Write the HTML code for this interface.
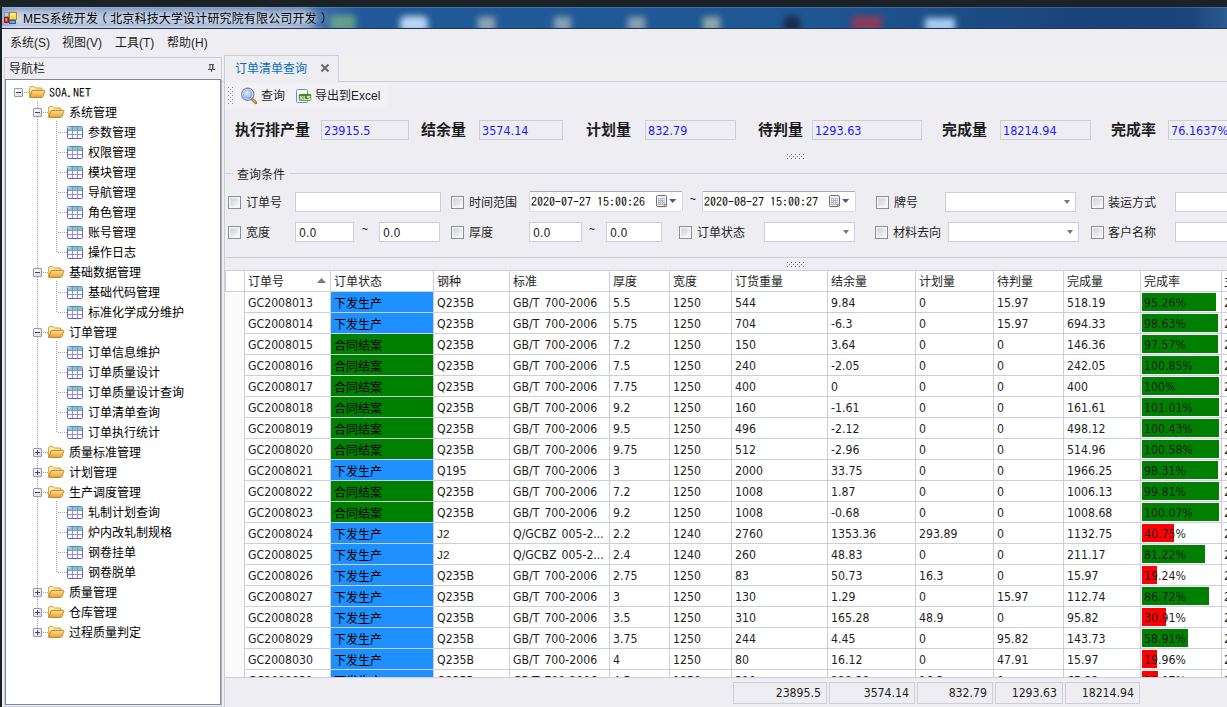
<!DOCTYPE html>
<html lang="zh-CN"><head><meta charset="utf-8"><title>MES系统开发</title>
<style>
html,body{margin:0;padding:0}
body{width:1227px;height:707px;overflow:hidden;position:relative;background:#EEEEF2;
 font-family:"Liberation Sans","Noto Sans CJK SC",sans-serif;font-size:12px;color:#1e1e1e;line-height:1}
.a{position:absolute;white-space:nowrap}
.t{position:absolute;white-space:nowrap;font-size:12px;line-height:14px;height:14px;color:#1e1e1e}
.cb{position:absolute;width:11px;height:11px;border:1px solid #8e8f8f;background:linear-gradient(135deg,#d4d7db 0%,#f4f4f4 60%,#fdfdfd 100%);box-shadow:inset 0 0 0 1px #f4f4f4}
.cb i{position:absolute;left:2px;top:2px;width:7px;height:7px;background:linear-gradient(135deg,#cdd1d6,#f6f6f6)}
.in{position:absolute;background:#fff;border:1px solid #CCCEDB;box-sizing:border-box}
.sv{position:absolute;background:#EEEEF2;border:1px solid #CCCEDB;box-sizing:border-box;height:20px;color:#1a1aff;font-family:"DejaVu Sans Condensed","Liberation Sans","Noto Sans CJK SC",sans-serif;font-size:12.5px;line-height:20px;padding-left:2px}
.sl{position:absolute;font-weight:bold;font-size:15px;line-height:18px;color:#1e1e1e;white-space:nowrap}
.arr{position:absolute;width:0;height:0;border-left:3.5px solid transparent;border-right:3.5px solid transparent;border-top:4px solid #777}
.g{position:absolute;white-space:nowrap;font-family:"DejaVu Sans Condensed","Liberation Sans","Noto Sans CJK SC",sans-serif;font-size:12.2px;word-spacing:1.5px;line-height:21px;height:21px;color:#1e1e1e;overflow:hidden}
.gh{position:absolute;white-space:nowrap;font-size:12px;line-height:20px;height:20px;color:#1e1e1e}
.vl{position:absolute;width:1px;background:#CCCEDB}
.hl{position:absolute;height:1px;background:#CCCEDB}
.ft{position:absolute;box-sizing:border-box;border:1px solid #CCCEDB;background:#EEEEF2;height:22px;top:682px;font-family:"DejaVu Sans Condensed","Liberation Sans","Noto Sans CJK SC",sans-serif;font-size:12.2px;line-height:21px;text-align:right;padding-right:5px;color:#1e1e1e}
.tr{position:absolute;white-space:nowrap;font-size:12px;line-height:14px;color:#000}
</style></head>
<body>
<svg width="0" height="0" style="position:absolute"><defs>
<linearGradient id="fg" x1="0" y1="0" x2="0" y2="1"><stop offset="0" stop-color="#fbe08c"/><stop offset="0.5" stop-color="#f3c35c"/><stop offset="1" stop-color="#e2a034"/></linearGradient>
<linearGradient id="tb" x1="0" y1="0" x2="0" y2="1"><stop offset="0" stop-color="#4f86de"/><stop offset="0.4" stop-color="#5a6fdc"/><stop offset="1" stop-color="#6a5ad6"/></linearGradient>
<linearGradient id="fb" x1="0" y1="0" x2="1" y2="1"><stop offset="0" stop-color="#fff6c0"/><stop offset="0.5" stop-color="#fdf0a8"/><stop offset="1" stop-color="#f2cf70"/></linearGradient>
</defs></svg>
<div class="a" style="left:0;top:0;width:1227px;height:7px;background:#1b2225"></div>
<div class="a" style="left:2px;top:7px;width:1225px;height:21px;overflow:hidden;background:linear-gradient(90deg,#7b96c5 0px,#7290c0 40px,#6587bb 130px,#5a7fb5 230px,#4672ab 300px,#2f64a2 335px,#21599a 356px,#205a98 520px,#1f5794 800px,#1c4d86 950px,#1a4379 1100px,#1b467c 1190px,#2a5a90 1225px)"><div class="a" style="left:12px;top:3px;width:300px;height:19px;background:rgba(255,255,255,.52);filter:blur(5px);border-radius:9px"></div><div class="a" style="left:0;top:0;width:1225px;height:1px;background:rgba(255,255,255,.14)"></div><div class="a" style="left:0;top:3px;width:20px;height:17px;background:rgba(255,255,255,.45);filter:blur(3px)"></div><div class="a" style="left:0;top:19px;width:330px;height:2px;background:linear-gradient(90deg,rgba(255,255,255,.45) 0,rgba(255,255,255,.35) 280px,rgba(255,255,255,0) 330px)"></div><div class="a" style="left:328px;top:8px;width:26px;height:16px;background:#7fb783;opacity:.7;filter:blur(3px);border-radius:4px"></div><div class="a" style="left:398px;top:9px;width:28px;height:16px;background:#b9d6f2;filter:blur(3px);border-radius:6px"></div><div class="a" style="left:476px;top:10px;width:17px;height:14px;background:#90a7b4;filter:blur(3px)"></div><div class="a" style="left:552px;top:10px;width:17px;height:14px;background:#8ba3b3;filter:blur(3px)"></div><div class="a" style="left:626px;top:10px;width:17px;height:14px;background:#8ba3b3;filter:blur(3px)"></div><div class="a" style="left:701px;top:10px;width:17px;height:14px;background:#93a9a8;filter:blur(3px)"></div><div class="a" style="left:781px;top:9px;width:18px;height:16px;background:#1a2c4a;filter:blur(3px);border-radius:8px"></div><div class="a" style="left:850px;top:9px;width:30px;height:15px;background:#8a3b5a;filter:blur(3px)"></div><div class="a" style="left:923px;top:11px;width:30px;height:14px;background:#a9cdf0;filter:blur(3px)"></div></div>
<div class="a" style="left:2px;top:28px;width:1225px;height:1px;background:#1d3557"></div>
<div class="a" style="left:0;top:0;width:2px;height:707px;background:#1a2124"></div>
<svg class="a" style="left:4px;top:11px" width="14" height="14" viewBox="0 0 14 14">
<rect x="0.5" y="1.5" width="4" height="4" fill="#b9c6e2" stroke="#8796bd"/>
<rect x="5.5" y="1.5" width="7" height="7" fill="#ffd95a" stroke="#b8860b"/>
<rect x="6.5" y="2.5" width="5" height="2" fill="#fff1a8"/>
<rect x="0.5" y="6.5" width="4" height="5" fill="#e03224" stroke="#8f1d14"/>
<rect x="1.5" y="7.5" width="1.5" height="2" fill="#ffb0a0"/>
<rect x="5.5" y="9.5" width="6" height="3" fill="#6fa0e6" stroke="#2d5aa5"/>
<rect x="0.5" y="12.5" width="4" height="1" fill="#9fb0d0"/>
</svg>
<div class="a" style="left:23px;top:11px;font-size:12px;line-height:17px;letter-spacing:0.15px;color:#000;text-shadow:0 0 5px rgba(255,255,255,.7),0 0 8px rgba(255,255,255,.5)">MES系统开发<span style="margin-left:-3px;margin-right:3px">（</span>北京科技大学设计研究院有限公司开发<span style="margin-left:4px">）</span></div>
<div class="t" style="left:10px;top:36px">系统(S)</div>
<div class="t" style="left:62px;top:36px">视图(V)</div>
<div class="t" style="left:115px;top:36px">工具(T)</div>
<div class="t" style="left:167px;top:36px">帮助(H)</div>
<div class="a" style="left:222px;top:55px;width:1005px;height:26px;background:#F0F0F0"></div>
<div class="a" style="left:4px;top:57px;width:218px;height:650px;border:1px solid #CCCEDB;box-sizing:border-box;background:#EEEEF2"></div>
<div class="t" style="left:9px;top:62px">导航栏</div>
<svg class="a" style="left:208px;top:64px" width="7" height="8" viewBox="0 0 7 8"><path d="M1 0.5H6M2 0.5V5M4.75 0.5V5M0 5.5H7M3.5 6V8" stroke="#505050" stroke-width="1" fill="none"/><path d="M4 1V5H5.25V1Z" fill="#505050"/></svg>
<div class="a" style="left:5px;top:79px;width:216px;height:626px;border:1px solid #828790;box-sizing:border-box;background:#fff"></div>
<div class="a" style="left:221px;top:80px;width:1px;height:625px;background:#b4b7c4"></div>
<div class="a" style="left:37px;top:101px;width:1px;height:527px;background:repeating-linear-gradient(180deg,#a0a0a0 0 1px,transparent 1px 2px)"></div>
<div class="a" style="left:56px;top:121px;width:1px;height:132px;background:repeating-linear-gradient(180deg,#a0a0a0 0 1px,transparent 1px 2px)"></div>
<div class="a" style="left:56px;top:281px;width:1px;height:32px;background:repeating-linear-gradient(180deg,#a0a0a0 0 1px,transparent 1px 2px)"></div>
<div class="a" style="left:56px;top:341px;width:1px;height:92px;background:repeating-linear-gradient(180deg,#a0a0a0 0 1px,transparent 1px 2px)"></div>
<div class="a" style="left:56px;top:501px;width:1px;height:72px;background:repeating-linear-gradient(180deg,#a0a0a0 0 1px,transparent 1px 2px)"></div>
<div class="a" style="left:14px;top:88px;width:7px;height:7px;border:1px solid #9b9b9b;border-radius:1px;background:linear-gradient(135deg,#fff,#dcdad5)"></div><div class="a" style="left:16px;top:92px;width:5px;height:1px;background:#2b44a3"></div>
<div class="a" style="left:24px;top:92px;width:6px;height:1px;background:repeating-linear-gradient(90deg,#a0a0a0 0 1px,transparent 1px 2px)"></div>
<svg class="a" style="left:29px;top:86px" width="17" height="12" viewBox="0 0 17 12">
<path d="M0.7 11V1.6Q0.7 0.6 1.8 0.6H4.6Q5.2 0.6 5.6 1.1L6.4 2H12Q13 2 13 3V4.4H3.6L0.7 11Z" fill="url(#fb)" stroke="#c98f2e" stroke-width="0.9"/>
<path d="M0.8 11.45L3 5Q3.2 4.4 3.9 4.4H15.3Q16.2 4.4 15.9 5.2L13.7 10.8Q13.4 11.5 12.6 11.5H1Z" fill="url(#fg)" stroke="#bd7b24" stroke-width="0.9"/>
</svg>
<div class="tr" style="left:49px;top:85px;font-family:IPAGothic,'Liberation Mono',monospace;font-size:12px;line-height:14px">SOA.NET</div>
<div class="a" style="left:33px;top:108px;width:7px;height:7px;border:1px solid #9b9b9b;border-radius:1px;background:linear-gradient(135deg,#fff,#dcdad5)"></div><div class="a" style="left:35px;top:112px;width:5px;height:1px;background:#2b44a3"></div>
<div class="a" style="left:43px;top:112px;width:6px;height:1px;background:repeating-linear-gradient(90deg,#a0a0a0 0 1px,transparent 1px 2px)"></div>
<svg class="a" style="left:48px;top:106px" width="17" height="12" viewBox="0 0 17 12">
<path d="M0.7 11V1.6Q0.7 0.6 1.8 0.6H4.6Q5.2 0.6 5.6 1.1L6.4 2H12Q13 2 13 3V4.4H3.6L0.7 11Z" fill="url(#fb)" stroke="#c98f2e" stroke-width="0.9"/>
<path d="M0.8 11.45L3 5Q3.2 4.4 3.9 4.4H15.3Q16.2 4.4 15.9 5.2L13.7 10.8Q13.4 11.5 12.6 11.5H1Z" fill="url(#fg)" stroke="#bd7b24" stroke-width="0.9"/>
</svg>
<div class="tr" style="left:69px;top:106px">系统管理</div>
<div class="a" style="left:58px;top:132px;width:9px;height:1px;background:repeating-linear-gradient(90deg,#a0a0a0 0 1px,transparent 1px 2px)"></div>
<svg class="a" style="left:67px;top:126px" width="16" height="13" viewBox="0 0 16 13">
<rect x="0.5" y="0.5" width="15" height="12" rx="1.2" fill="#fdfdf4" stroke="url(#tb)"/>
<rect x="1" y="1" width="14" height="3.5" fill="#8ccab6"/>
<rect x="1" y="1" width="2.2" height="1.6" fill="#cfe6fb"/>
<path d="M1 4.5H15M1 8.5H15M5.5 1V12M10.5 1V12" stroke="#8c90da" stroke-width="1" fill="none"/>
<path d="M5.5 1V4.5M10.5 1V4.5" stroke="#6f9ad6" stroke-width="1" fill="none"/>
</svg>
<div class="tr" style="left:88px;top:126px">参数管理</div>
<div class="a" style="left:58px;top:152px;width:9px;height:1px;background:repeating-linear-gradient(90deg,#a0a0a0 0 1px,transparent 1px 2px)"></div>
<svg class="a" style="left:67px;top:146px" width="16" height="13" viewBox="0 0 16 13">
<rect x="0.5" y="0.5" width="15" height="12" rx="1.2" fill="#fdfdf4" stroke="url(#tb)"/>
<rect x="1" y="1" width="14" height="3.5" fill="#8ccab6"/>
<rect x="1" y="1" width="2.2" height="1.6" fill="#cfe6fb"/>
<path d="M1 4.5H15M1 8.5H15M5.5 1V12M10.5 1V12" stroke="#8c90da" stroke-width="1" fill="none"/>
<path d="M5.5 1V4.5M10.5 1V4.5" stroke="#6f9ad6" stroke-width="1" fill="none"/>
</svg>
<div class="tr" style="left:88px;top:146px">权限管理</div>
<div class="a" style="left:58px;top:172px;width:9px;height:1px;background:repeating-linear-gradient(90deg,#a0a0a0 0 1px,transparent 1px 2px)"></div>
<svg class="a" style="left:67px;top:166px" width="16" height="13" viewBox="0 0 16 13">
<rect x="0.5" y="0.5" width="15" height="12" rx="1.2" fill="#fdfdf4" stroke="url(#tb)"/>
<rect x="1" y="1" width="14" height="3.5" fill="#8ccab6"/>
<rect x="1" y="1" width="2.2" height="1.6" fill="#cfe6fb"/>
<path d="M1 4.5H15M1 8.5H15M5.5 1V12M10.5 1V12" stroke="#8c90da" stroke-width="1" fill="none"/>
<path d="M5.5 1V4.5M10.5 1V4.5" stroke="#6f9ad6" stroke-width="1" fill="none"/>
</svg>
<div class="tr" style="left:88px;top:166px">模块管理</div>
<div class="a" style="left:58px;top:192px;width:9px;height:1px;background:repeating-linear-gradient(90deg,#a0a0a0 0 1px,transparent 1px 2px)"></div>
<svg class="a" style="left:67px;top:186px" width="16" height="13" viewBox="0 0 16 13">
<rect x="0.5" y="0.5" width="15" height="12" rx="1.2" fill="#fdfdf4" stroke="url(#tb)"/>
<rect x="1" y="1" width="14" height="3.5" fill="#8ccab6"/>
<rect x="1" y="1" width="2.2" height="1.6" fill="#cfe6fb"/>
<path d="M1 4.5H15M1 8.5H15M5.5 1V12M10.5 1V12" stroke="#8c90da" stroke-width="1" fill="none"/>
<path d="M5.5 1V4.5M10.5 1V4.5" stroke="#6f9ad6" stroke-width="1" fill="none"/>
</svg>
<div class="tr" style="left:88px;top:186px">导航管理</div>
<div class="a" style="left:58px;top:212px;width:9px;height:1px;background:repeating-linear-gradient(90deg,#a0a0a0 0 1px,transparent 1px 2px)"></div>
<svg class="a" style="left:67px;top:206px" width="16" height="13" viewBox="0 0 16 13">
<rect x="0.5" y="0.5" width="15" height="12" rx="1.2" fill="#fdfdf4" stroke="url(#tb)"/>
<rect x="1" y="1" width="14" height="3.5" fill="#8ccab6"/>
<rect x="1" y="1" width="2.2" height="1.6" fill="#cfe6fb"/>
<path d="M1 4.5H15M1 8.5H15M5.5 1V12M10.5 1V12" stroke="#8c90da" stroke-width="1" fill="none"/>
<path d="M5.5 1V4.5M10.5 1V4.5" stroke="#6f9ad6" stroke-width="1" fill="none"/>
</svg>
<div class="tr" style="left:88px;top:206px">角色管理</div>
<div class="a" style="left:58px;top:232px;width:9px;height:1px;background:repeating-linear-gradient(90deg,#a0a0a0 0 1px,transparent 1px 2px)"></div>
<svg class="a" style="left:67px;top:226px" width="16" height="13" viewBox="0 0 16 13">
<rect x="0.5" y="0.5" width="15" height="12" rx="1.2" fill="#fdfdf4" stroke="url(#tb)"/>
<rect x="1" y="1" width="14" height="3.5" fill="#8ccab6"/>
<rect x="1" y="1" width="2.2" height="1.6" fill="#cfe6fb"/>
<path d="M1 4.5H15M1 8.5H15M5.5 1V12M10.5 1V12" stroke="#8c90da" stroke-width="1" fill="none"/>
<path d="M5.5 1V4.5M10.5 1V4.5" stroke="#6f9ad6" stroke-width="1" fill="none"/>
</svg>
<div class="tr" style="left:88px;top:226px">账号管理</div>
<div class="a" style="left:58px;top:252px;width:9px;height:1px;background:repeating-linear-gradient(90deg,#a0a0a0 0 1px,transparent 1px 2px)"></div>
<svg class="a" style="left:67px;top:246px" width="16" height="13" viewBox="0 0 16 13">
<rect x="0.5" y="0.5" width="15" height="12" rx="1.2" fill="#fdfdf4" stroke="url(#tb)"/>
<rect x="1" y="1" width="14" height="3.5" fill="#8ccab6"/>
<rect x="1" y="1" width="2.2" height="1.6" fill="#cfe6fb"/>
<path d="M1 4.5H15M1 8.5H15M5.5 1V12M10.5 1V12" stroke="#8c90da" stroke-width="1" fill="none"/>
<path d="M5.5 1V4.5M10.5 1V4.5" stroke="#6f9ad6" stroke-width="1" fill="none"/>
</svg>
<div class="tr" style="left:88px;top:246px">操作日志</div>
<div class="a" style="left:33px;top:268px;width:7px;height:7px;border:1px solid #9b9b9b;border-radius:1px;background:linear-gradient(135deg,#fff,#dcdad5)"></div><div class="a" style="left:35px;top:272px;width:5px;height:1px;background:#2b44a3"></div>
<div class="a" style="left:43px;top:272px;width:6px;height:1px;background:repeating-linear-gradient(90deg,#a0a0a0 0 1px,transparent 1px 2px)"></div>
<svg class="a" style="left:48px;top:266px" width="17" height="12" viewBox="0 0 17 12">
<path d="M0.7 11V1.6Q0.7 0.6 1.8 0.6H4.6Q5.2 0.6 5.6 1.1L6.4 2H12Q13 2 13 3V4.4H3.6L0.7 11Z" fill="url(#fb)" stroke="#c98f2e" stroke-width="0.9"/>
<path d="M0.8 11.45L3 5Q3.2 4.4 3.9 4.4H15.3Q16.2 4.4 15.9 5.2L13.7 10.8Q13.4 11.5 12.6 11.5H1Z" fill="url(#fg)" stroke="#bd7b24" stroke-width="0.9"/>
</svg>
<div class="tr" style="left:69px;top:266px">基础数据管理</div>
<div class="a" style="left:58px;top:292px;width:9px;height:1px;background:repeating-linear-gradient(90deg,#a0a0a0 0 1px,transparent 1px 2px)"></div>
<svg class="a" style="left:67px;top:286px" width="16" height="13" viewBox="0 0 16 13">
<rect x="0.5" y="0.5" width="15" height="12" rx="1.2" fill="#fdfdf4" stroke="url(#tb)"/>
<rect x="1" y="1" width="14" height="3.5" fill="#8ccab6"/>
<rect x="1" y="1" width="2.2" height="1.6" fill="#cfe6fb"/>
<path d="M1 4.5H15M1 8.5H15M5.5 1V12M10.5 1V12" stroke="#8c90da" stroke-width="1" fill="none"/>
<path d="M5.5 1V4.5M10.5 1V4.5" stroke="#6f9ad6" stroke-width="1" fill="none"/>
</svg>
<div class="tr" style="left:88px;top:286px">基础代码管理</div>
<div class="a" style="left:58px;top:312px;width:9px;height:1px;background:repeating-linear-gradient(90deg,#a0a0a0 0 1px,transparent 1px 2px)"></div>
<svg class="a" style="left:67px;top:306px" width="16" height="13" viewBox="0 0 16 13">
<rect x="0.5" y="0.5" width="15" height="12" rx="1.2" fill="#fdfdf4" stroke="url(#tb)"/>
<rect x="1" y="1" width="14" height="3.5" fill="#8ccab6"/>
<rect x="1" y="1" width="2.2" height="1.6" fill="#cfe6fb"/>
<path d="M1 4.5H15M1 8.5H15M5.5 1V12M10.5 1V12" stroke="#8c90da" stroke-width="1" fill="none"/>
<path d="M5.5 1V4.5M10.5 1V4.5" stroke="#6f9ad6" stroke-width="1" fill="none"/>
</svg>
<div class="tr" style="left:88px;top:306px">标准化学成分维护</div>
<div class="a" style="left:33px;top:328px;width:7px;height:7px;border:1px solid #9b9b9b;border-radius:1px;background:linear-gradient(135deg,#fff,#dcdad5)"></div><div class="a" style="left:35px;top:332px;width:5px;height:1px;background:#2b44a3"></div>
<div class="a" style="left:43px;top:332px;width:6px;height:1px;background:repeating-linear-gradient(90deg,#a0a0a0 0 1px,transparent 1px 2px)"></div>
<svg class="a" style="left:48px;top:326px" width="17" height="12" viewBox="0 0 17 12">
<path d="M0.7 11V1.6Q0.7 0.6 1.8 0.6H4.6Q5.2 0.6 5.6 1.1L6.4 2H12Q13 2 13 3V4.4H3.6L0.7 11Z" fill="url(#fb)" stroke="#c98f2e" stroke-width="0.9"/>
<path d="M0.8 11.45L3 5Q3.2 4.4 3.9 4.4H15.3Q16.2 4.4 15.9 5.2L13.7 10.8Q13.4 11.5 12.6 11.5H1Z" fill="url(#fg)" stroke="#bd7b24" stroke-width="0.9"/>
</svg>
<div class="tr" style="left:69px;top:326px">订单管理</div>
<div class="a" style="left:58px;top:352px;width:9px;height:1px;background:repeating-linear-gradient(90deg,#a0a0a0 0 1px,transparent 1px 2px)"></div>
<svg class="a" style="left:67px;top:346px" width="16" height="13" viewBox="0 0 16 13">
<rect x="0.5" y="0.5" width="15" height="12" rx="1.2" fill="#fdfdf4" stroke="url(#tb)"/>
<rect x="1" y="1" width="14" height="3.5" fill="#8ccab6"/>
<rect x="1" y="1" width="2.2" height="1.6" fill="#cfe6fb"/>
<path d="M1 4.5H15M1 8.5H15M5.5 1V12M10.5 1V12" stroke="#8c90da" stroke-width="1" fill="none"/>
<path d="M5.5 1V4.5M10.5 1V4.5" stroke="#6f9ad6" stroke-width="1" fill="none"/>
</svg>
<div class="tr" style="left:88px;top:346px">订单信息维护</div>
<div class="a" style="left:58px;top:372px;width:9px;height:1px;background:repeating-linear-gradient(90deg,#a0a0a0 0 1px,transparent 1px 2px)"></div>
<svg class="a" style="left:67px;top:366px" width="16" height="13" viewBox="0 0 16 13">
<rect x="0.5" y="0.5" width="15" height="12" rx="1.2" fill="#fdfdf4" stroke="url(#tb)"/>
<rect x="1" y="1" width="14" height="3.5" fill="#8ccab6"/>
<rect x="1" y="1" width="2.2" height="1.6" fill="#cfe6fb"/>
<path d="M1 4.5H15M1 8.5H15M5.5 1V12M10.5 1V12" stroke="#8c90da" stroke-width="1" fill="none"/>
<path d="M5.5 1V4.5M10.5 1V4.5" stroke="#6f9ad6" stroke-width="1" fill="none"/>
</svg>
<div class="tr" style="left:88px;top:366px">订单质量设计</div>
<div class="a" style="left:58px;top:392px;width:9px;height:1px;background:repeating-linear-gradient(90deg,#a0a0a0 0 1px,transparent 1px 2px)"></div>
<svg class="a" style="left:67px;top:386px" width="16" height="13" viewBox="0 0 16 13">
<rect x="0.5" y="0.5" width="15" height="12" rx="1.2" fill="#fdfdf4" stroke="url(#tb)"/>
<rect x="1" y="1" width="14" height="3.5" fill="#8ccab6"/>
<rect x="1" y="1" width="2.2" height="1.6" fill="#cfe6fb"/>
<path d="M1 4.5H15M1 8.5H15M5.5 1V12M10.5 1V12" stroke="#8c90da" stroke-width="1" fill="none"/>
<path d="M5.5 1V4.5M10.5 1V4.5" stroke="#6f9ad6" stroke-width="1" fill="none"/>
</svg>
<div class="tr" style="left:88px;top:386px">订单质量设计查询</div>
<div class="a" style="left:58px;top:412px;width:9px;height:1px;background:repeating-linear-gradient(90deg,#a0a0a0 0 1px,transparent 1px 2px)"></div>
<svg class="a" style="left:67px;top:406px" width="16" height="13" viewBox="0 0 16 13">
<rect x="0.5" y="0.5" width="15" height="12" rx="1.2" fill="#fdfdf4" stroke="url(#tb)"/>
<rect x="1" y="1" width="14" height="3.5" fill="#8ccab6"/>
<rect x="1" y="1" width="2.2" height="1.6" fill="#cfe6fb"/>
<path d="M1 4.5H15M1 8.5H15M5.5 1V12M10.5 1V12" stroke="#8c90da" stroke-width="1" fill="none"/>
<path d="M5.5 1V4.5M10.5 1V4.5" stroke="#6f9ad6" stroke-width="1" fill="none"/>
</svg>
<div class="tr" style="left:88px;top:406px">订单清单查询</div>
<div class="a" style="left:58px;top:432px;width:9px;height:1px;background:repeating-linear-gradient(90deg,#a0a0a0 0 1px,transparent 1px 2px)"></div>
<svg class="a" style="left:67px;top:426px" width="16" height="13" viewBox="0 0 16 13">
<rect x="0.5" y="0.5" width="15" height="12" rx="1.2" fill="#fdfdf4" stroke="url(#tb)"/>
<rect x="1" y="1" width="14" height="3.5" fill="#8ccab6"/>
<rect x="1" y="1" width="2.2" height="1.6" fill="#cfe6fb"/>
<path d="M1 4.5H15M1 8.5H15M5.5 1V12M10.5 1V12" stroke="#8c90da" stroke-width="1" fill="none"/>
<path d="M5.5 1V4.5M10.5 1V4.5" stroke="#6f9ad6" stroke-width="1" fill="none"/>
</svg>
<div class="tr" style="left:88px;top:426px">订单执行统计</div>
<div class="a" style="left:33px;top:448px;width:7px;height:7px;border:1px solid #9b9b9b;border-radius:1px;background:linear-gradient(135deg,#fff,#dcdad5)"></div><div class="a" style="left:35px;top:452px;width:5px;height:1px;background:#2b44a3"></div><div class="a" style="left:37px;top:450px;width:1px;height:5px;background:#2b44a3"></div>
<div class="a" style="left:43px;top:452px;width:6px;height:1px;background:repeating-linear-gradient(90deg,#a0a0a0 0 1px,transparent 1px 2px)"></div>
<svg class="a" style="left:48px;top:446px" width="17" height="12" viewBox="0 0 17 12">
<path d="M0.7 11V1.6Q0.7 0.6 1.8 0.6H4.6Q5.2 0.6 5.6 1.1L6.4 2H12Q13 2 13 3V4.4H3.6L0.7 11Z" fill="url(#fb)" stroke="#c98f2e" stroke-width="0.9"/>
<path d="M0.8 11.45L3 5Q3.2 4.4 3.9 4.4H15.3Q16.2 4.4 15.9 5.2L13.7 10.8Q13.4 11.5 12.6 11.5H1Z" fill="url(#fg)" stroke="#bd7b24" stroke-width="0.9"/>
</svg>
<div class="tr" style="left:69px;top:446px">质量标准管理</div>
<div class="a" style="left:33px;top:468px;width:7px;height:7px;border:1px solid #9b9b9b;border-radius:1px;background:linear-gradient(135deg,#fff,#dcdad5)"></div><div class="a" style="left:35px;top:472px;width:5px;height:1px;background:#2b44a3"></div><div class="a" style="left:37px;top:470px;width:1px;height:5px;background:#2b44a3"></div>
<div class="a" style="left:43px;top:472px;width:6px;height:1px;background:repeating-linear-gradient(90deg,#a0a0a0 0 1px,transparent 1px 2px)"></div>
<svg class="a" style="left:48px;top:466px" width="17" height="12" viewBox="0 0 17 12">
<path d="M0.7 11V1.6Q0.7 0.6 1.8 0.6H4.6Q5.2 0.6 5.6 1.1L6.4 2H12Q13 2 13 3V4.4H3.6L0.7 11Z" fill="url(#fb)" stroke="#c98f2e" stroke-width="0.9"/>
<path d="M0.8 11.45L3 5Q3.2 4.4 3.9 4.4H15.3Q16.2 4.4 15.9 5.2L13.7 10.8Q13.4 11.5 12.6 11.5H1Z" fill="url(#fg)" stroke="#bd7b24" stroke-width="0.9"/>
</svg>
<div class="tr" style="left:69px;top:466px">计划管理</div>
<div class="a" style="left:33px;top:488px;width:7px;height:7px;border:1px solid #9b9b9b;border-radius:1px;background:linear-gradient(135deg,#fff,#dcdad5)"></div><div class="a" style="left:35px;top:492px;width:5px;height:1px;background:#2b44a3"></div>
<div class="a" style="left:43px;top:492px;width:6px;height:1px;background:repeating-linear-gradient(90deg,#a0a0a0 0 1px,transparent 1px 2px)"></div>
<svg class="a" style="left:48px;top:486px" width="17" height="12" viewBox="0 0 17 12">
<path d="M0.7 11V1.6Q0.7 0.6 1.8 0.6H4.6Q5.2 0.6 5.6 1.1L6.4 2H12Q13 2 13 3V4.4H3.6L0.7 11Z" fill="url(#fb)" stroke="#c98f2e" stroke-width="0.9"/>
<path d="M0.8 11.45L3 5Q3.2 4.4 3.9 4.4H15.3Q16.2 4.4 15.9 5.2L13.7 10.8Q13.4 11.5 12.6 11.5H1Z" fill="url(#fg)" stroke="#bd7b24" stroke-width="0.9"/>
</svg>
<div class="tr" style="left:69px;top:486px">生产调度管理</div>
<div class="a" style="left:58px;top:512px;width:9px;height:1px;background:repeating-linear-gradient(90deg,#a0a0a0 0 1px,transparent 1px 2px)"></div>
<svg class="a" style="left:67px;top:506px" width="16" height="13" viewBox="0 0 16 13">
<rect x="0.5" y="0.5" width="15" height="12" rx="1.2" fill="#fdfdf4" stroke="url(#tb)"/>
<rect x="1" y="1" width="14" height="3.5" fill="#8ccab6"/>
<rect x="1" y="1" width="2.2" height="1.6" fill="#cfe6fb"/>
<path d="M1 4.5H15M1 8.5H15M5.5 1V12M10.5 1V12" stroke="#8c90da" stroke-width="1" fill="none"/>
<path d="M5.5 1V4.5M10.5 1V4.5" stroke="#6f9ad6" stroke-width="1" fill="none"/>
</svg>
<div class="tr" style="left:88px;top:506px">轧制计划查询</div>
<div class="a" style="left:58px;top:532px;width:9px;height:1px;background:repeating-linear-gradient(90deg,#a0a0a0 0 1px,transparent 1px 2px)"></div>
<svg class="a" style="left:67px;top:526px" width="16" height="13" viewBox="0 0 16 13">
<rect x="0.5" y="0.5" width="15" height="12" rx="1.2" fill="#fdfdf4" stroke="url(#tb)"/>
<rect x="1" y="1" width="14" height="3.5" fill="#8ccab6"/>
<rect x="1" y="1" width="2.2" height="1.6" fill="#cfe6fb"/>
<path d="M1 4.5H15M1 8.5H15M5.5 1V12M10.5 1V12" stroke="#8c90da" stroke-width="1" fill="none"/>
<path d="M5.5 1V4.5M10.5 1V4.5" stroke="#6f9ad6" stroke-width="1" fill="none"/>
</svg>
<div class="tr" style="left:88px;top:526px">炉内改轧制规格</div>
<div class="a" style="left:58px;top:552px;width:9px;height:1px;background:repeating-linear-gradient(90deg,#a0a0a0 0 1px,transparent 1px 2px)"></div>
<svg class="a" style="left:67px;top:546px" width="16" height="13" viewBox="0 0 16 13">
<rect x="0.5" y="0.5" width="15" height="12" rx="1.2" fill="#fdfdf4" stroke="url(#tb)"/>
<rect x="1" y="1" width="14" height="3.5" fill="#8ccab6"/>
<rect x="1" y="1" width="2.2" height="1.6" fill="#cfe6fb"/>
<path d="M1 4.5H15M1 8.5H15M5.5 1V12M10.5 1V12" stroke="#8c90da" stroke-width="1" fill="none"/>
<path d="M5.5 1V4.5M10.5 1V4.5" stroke="#6f9ad6" stroke-width="1" fill="none"/>
</svg>
<div class="tr" style="left:88px;top:546px">钢卷挂单</div>
<div class="a" style="left:58px;top:572px;width:9px;height:1px;background:repeating-linear-gradient(90deg,#a0a0a0 0 1px,transparent 1px 2px)"></div>
<svg class="a" style="left:67px;top:566px" width="16" height="13" viewBox="0 0 16 13">
<rect x="0.5" y="0.5" width="15" height="12" rx="1.2" fill="#fdfdf4" stroke="url(#tb)"/>
<rect x="1" y="1" width="14" height="3.5" fill="#8ccab6"/>
<rect x="1" y="1" width="2.2" height="1.6" fill="#cfe6fb"/>
<path d="M1 4.5H15M1 8.5H15M5.5 1V12M10.5 1V12" stroke="#8c90da" stroke-width="1" fill="none"/>
<path d="M5.5 1V4.5M10.5 1V4.5" stroke="#6f9ad6" stroke-width="1" fill="none"/>
</svg>
<div class="tr" style="left:88px;top:566px">钢卷脱单</div>
<div class="a" style="left:33px;top:588px;width:7px;height:7px;border:1px solid #9b9b9b;border-radius:1px;background:linear-gradient(135deg,#fff,#dcdad5)"></div><div class="a" style="left:35px;top:592px;width:5px;height:1px;background:#2b44a3"></div><div class="a" style="left:37px;top:590px;width:1px;height:5px;background:#2b44a3"></div>
<div class="a" style="left:43px;top:592px;width:6px;height:1px;background:repeating-linear-gradient(90deg,#a0a0a0 0 1px,transparent 1px 2px)"></div>
<svg class="a" style="left:48px;top:586px" width="17" height="12" viewBox="0 0 17 12">
<path d="M0.7 11V1.6Q0.7 0.6 1.8 0.6H4.6Q5.2 0.6 5.6 1.1L6.4 2H12Q13 2 13 3V4.4H3.6L0.7 11Z" fill="url(#fb)" stroke="#c98f2e" stroke-width="0.9"/>
<path d="M0.8 11.45L3 5Q3.2 4.4 3.9 4.4H15.3Q16.2 4.4 15.9 5.2L13.7 10.8Q13.4 11.5 12.6 11.5H1Z" fill="url(#fg)" stroke="#bd7b24" stroke-width="0.9"/>
</svg>
<div class="tr" style="left:69px;top:586px">质量管理</div>
<div class="a" style="left:33px;top:608px;width:7px;height:7px;border:1px solid #9b9b9b;border-radius:1px;background:linear-gradient(135deg,#fff,#dcdad5)"></div><div class="a" style="left:35px;top:612px;width:5px;height:1px;background:#2b44a3"></div><div class="a" style="left:37px;top:610px;width:1px;height:5px;background:#2b44a3"></div>
<div class="a" style="left:43px;top:612px;width:6px;height:1px;background:repeating-linear-gradient(90deg,#a0a0a0 0 1px,transparent 1px 2px)"></div>
<svg class="a" style="left:48px;top:606px" width="17" height="12" viewBox="0 0 17 12">
<path d="M0.7 11V1.6Q0.7 0.6 1.8 0.6H4.6Q5.2 0.6 5.6 1.1L6.4 2H12Q13 2 13 3V4.4H3.6L0.7 11Z" fill="url(#fb)" stroke="#c98f2e" stroke-width="0.9"/>
<path d="M0.8 11.45L3 5Q3.2 4.4 3.9 4.4H15.3Q16.2 4.4 15.9 5.2L13.7 10.8Q13.4 11.5 12.6 11.5H1Z" fill="url(#fg)" stroke="#bd7b24" stroke-width="0.9"/>
</svg>
<div class="tr" style="left:69px;top:606px">仓库管理</div>
<div class="a" style="left:33px;top:628px;width:7px;height:7px;border:1px solid #9b9b9b;border-radius:1px;background:linear-gradient(135deg,#fff,#dcdad5)"></div><div class="a" style="left:35px;top:632px;width:5px;height:1px;background:#2b44a3"></div><div class="a" style="left:37px;top:630px;width:1px;height:5px;background:#2b44a3"></div>
<div class="a" style="left:43px;top:632px;width:6px;height:1px;background:repeating-linear-gradient(90deg,#a0a0a0 0 1px,transparent 1px 2px)"></div>
<svg class="a" style="left:48px;top:626px" width="17" height="12" viewBox="0 0 17 12">
<path d="M0.7 11V1.6Q0.7 0.6 1.8 0.6H4.6Q5.2 0.6 5.6 1.1L6.4 2H12Q13 2 13 3V4.4H3.6L0.7 11Z" fill="url(#fb)" stroke="#c98f2e" stroke-width="0.9"/>
<path d="M0.8 11.45L3 5Q3.2 4.4 3.9 4.4H15.3Q16.2 4.4 15.9 5.2L13.7 10.8Q13.4 11.5 12.6 11.5H1Z" fill="url(#fg)" stroke="#bd7b24" stroke-width="0.9"/>
</svg>
<div class="tr" style="left:69px;top:626px">过程质量判定</div>
<div class="a" style="left:222px;top:81px;width:1005px;height:1px;background:#CCCEDB"></div>
<div class="a" style="left:224px;top:55px;width:115px;height:27px;box-sizing:border-box;border:1px solid #CCCEDB;border-bottom:none;background:#EEEEF2"></div>
<div class="t" style="left:235px;top:62px;color:#0b6cc0">订单清单查询</div>
<svg class="a" style="left:320px;top:63px" width="10" height="10" viewBox="0 0 10 10"><path d="M1.5 1.5L8.5 8.5M8.5 1.5L1.5 8.5" stroke="#666" stroke-width="1.9"/></svg>
<div class="a" style="left:224px;top:81px;width:1px;height:626px;background:#CCCEDB"></div>
<div class="a" style="left:225px;top:83px;width:163px;height:26px;background:#F2F2F5"></div>
<svg class="a" style="left:228px;top:87px" width="5" height="17" viewBox="0 0 5 17" fill="#8f8f9a"><rect x="0" y="0" width="1" height="1"/><rect x="4" y="0" width="1" height="1"/><rect x="0" y="4" width="1" height="1"/><rect x="4" y="4" width="1" height="1"/><rect x="0" y="8" width="1" height="1"/><rect x="4" y="8" width="1" height="1"/><rect x="0" y="12" width="1" height="1"/><rect x="4" y="12" width="1" height="1"/><rect x="0" y="16" width="1" height="1"/><rect x="4" y="16" width="1" height="1"/><rect x="2" y="2" width="1" height="1"/><rect x="2" y="6" width="1" height="1"/><rect x="2" y="10" width="1" height="1"/><rect x="2" y="14" width="1" height="1"/></svg>
<svg class="a" style="left:240px;top:86px" width="18" height="19" viewBox="0 0 18 19">
<defs><radialGradient id="lg" cx="0.4" cy="0.35" r="0.75"><stop offset="0" stop-color="#e4f1fd"/><stop offset="0.55" stop-color="#a9cbf2"/><stop offset="1" stop-color="#6d9be0"/></radialGradient></defs>
<path d="M12 13L15.8 16.8" stroke="#9a5a1e" stroke-width="2.8" stroke-linecap="round"/>
<path d="M12 13L15.8 16.8" stroke="#eba04a" stroke-width="1.5" stroke-linecap="round"/>
<circle cx="7.8" cy="8.2" r="6.1" fill="#f4f7fc" stroke="#7c88ae" stroke-width="1.2"/>
<circle cx="7.8" cy="8.2" r="4.5" fill="url(#lg)" stroke="#7f9fd2" stroke-width="0.6"/>
</svg>
<div class="t" style="left:261px;top:89px">查询</div>
<svg class="a" style="left:296px;top:89px" width="16" height="15" viewBox="0 0 16 15">
<rect x="0.5" y="0.5" width="11" height="13" rx="1" fill="#f3f5fb" stroke="#7b8cc4"/>
<rect x="2" y="2" width="8" height="3" fill="#fdfdff"/>
<rect x="2.8" y="5" width="12.4" height="6.8" rx="1.4" fill="#3d8f1c"/>
<text x="9" y="10.6" font-size="6" font-family="Liberation Sans, sans-serif" font-weight="bold" fill="#fff" text-anchor="middle" style="text-rendering:geometricPrecision">XLS</text>
</svg>
<div class="t" style="left:315px;top:89px">导出到Excel</div>
<div class="sl" style="left:235px;top:121px">执行排产量</div>
<div class="sv" style="left:321px;top:120px;width:88px">23915.5</div>
<div class="sl" style="left:421px;top:121px">结余量</div>
<div class="sv" style="left:479px;top:120px;width:84px">3574.14</div>
<div class="sl" style="left:586px;top:121px">计划量</div>
<div class="sv" style="left:645px;top:120px;width:91px">832.79</div>
<div class="sl" style="left:758px;top:121px">待判量</div>
<div class="sv" style="left:812px;top:120px;width:110px">1293.63</div>
<div class="sl" style="left:942px;top:121px">完成量</div>
<div class="sv" style="left:1000px;top:120px;width:91px">18214.94</div>
<div class="sl" style="left:1111px;top:121px">完成率</div>
<div class="sv" style="left:1168px;top:120px;width:80px">76.1637%</div>
<svg class="a" style="left:787px;top:154px" width="18" height="6" viewBox="0 0 18 6"><rect x="1" y="1" width="1" height="1" fill="#fbfbfd"/><rect x="5" y="1" width="1" height="1" fill="#fbfbfd"/><rect x="9" y="1" width="1" height="1" fill="#fbfbfd"/><rect x="13" y="1" width="1" height="1" fill="#fbfbfd"/><rect x="17" y="1" width="1" height="1" fill="#fbfbfd"/><rect x="3" y="3" width="1" height="1" fill="#fbfbfd"/><rect x="7" y="3" width="1" height="1" fill="#fbfbfd"/><rect x="11" y="3" width="1" height="1" fill="#fbfbfd"/><rect x="15" y="3" width="1" height="1" fill="#fbfbfd"/><rect x="1" y="5" width="1" height="1" fill="#fbfbfd"/><rect x="5" y="5" width="1" height="1" fill="#fbfbfd"/><rect x="9" y="5" width="1" height="1" fill="#fbfbfd"/><rect x="13" y="5" width="1" height="1" fill="#fbfbfd"/><rect x="17" y="5" width="1" height="1" fill="#fbfbfd"/><rect x="0" y="0" width="1" height="1" fill="#6a6a6e"/><rect x="4" y="0" width="1" height="1" fill="#6a6a6e"/><rect x="8" y="0" width="1" height="1" fill="#6a6a6e"/><rect x="12" y="0" width="1" height="1" fill="#6a6a6e"/><rect x="16" y="0" width="1" height="1" fill="#6a6a6e"/><rect x="2" y="2" width="1" height="1" fill="#6a6a6e"/><rect x="6" y="2" width="1" height="1" fill="#6a6a6e"/><rect x="10" y="2" width="1" height="1" fill="#6a6a6e"/><rect x="14" y="2" width="1" height="1" fill="#6a6a6e"/><rect x="0" y="4" width="1" height="1" fill="#6a6a6e"/><rect x="4" y="4" width="1" height="1" fill="#6a6a6e"/><rect x="8" y="4" width="1" height="1" fill="#6a6a6e"/><rect x="12" y="4" width="1" height="1" fill="#6a6a6e"/><rect x="16" y="4" width="1" height="1" fill="#6a6a6e"/></svg>
<div class="hl" style="left:225px;top:173px;width:8px"></div>
<div class="hl" style="left:289px;top:173px;width:938px"></div>
<div class="hl" style="left:225px;top:257px;width:1002px"></div>
<div class="t" style="left:237px;top:168px">查询条件</div>
<div class="cb" style="left:228px;top:196px"><i></i></div>
<div class="t" style="left:246px;top:196px">订单号</div>
<div class="in" style="left:295px;top:192px;width:146px;height:20px"></div>
<div class="cb" style="left:451px;top:196px"><i></i></div>
<div class="t" style="left:469px;top:196px">时间范围</div>
<div class="in" style="left:529px;top:191px;width:154px;height:21px;border-radius:2px;border-color:#a9abb5 #d3d6e2 #d9dce8 #d3d6e2"></div><div class="a" style="left:531px;top:194px;font-family:IPAGothic,'Liberation Mono',monospace;font-size:12px;line-height:14px;color:#000">2020-07-27 15:00:26</div><svg class="a" style="left:656px;top:195px" width="22" height="14" viewBox="0 0 22 14">
<rect x="1.2" y="1.2" width="10" height="11.4" rx="1.3" fill="#c9c9cf" opacity="0.55"/>
<rect x="0.5" y="0.5" width="10" height="11" rx="1.3" fill="#eef1f9" stroke="#7a6c6a"/>
<rect x="2" y="3.2" width="6.6" height="6.6" fill="#a7aec5"/>
<g fill="#fff"><rect x="2.7" y="3.9" width="1.2" height="1.2"/><rect x="4.8" y="3.9" width="1.2" height="1.2"/><rect x="6.9" y="3.9" width="1.2" height="1.2"/>
<rect x="2.7" y="5.9" width="1.2" height="1.2"/><rect x="4.8" y="5.9" width="1.2" height="1.2"/><rect x="6.9" y="5.9" width="1.2" height="1.2"/>
<rect x="2.7" y="7.9" width="1.2" height="1.2"/><rect x="4.8" y="7.9" width="1.2" height="1.2"/><rect x="6.9" y="7.9" width="1.2" height="1.2"/></g>
<path d="M8.3 11.4V9.6H10.4" fill="none" stroke="#7a6c6a" stroke-width="0.8"/>
<path d="M13.1 4h7.1l-3.55 4z" fill="#3f5a8f"/>
</svg>
<div class="t" style="left:690px;top:193px;font-family:'Liberation Mono',monospace;transform:scaleX(0.85);transform-origin:0 0;color:#000">~</div>
<div class="in" style="left:702px;top:191px;width:154px;height:21px;border-radius:2px;border-color:#a9abb5 #d3d6e2 #d9dce8 #d3d6e2"></div><div class="a" style="left:704px;top:194px;font-family:IPAGothic,'Liberation Mono',monospace;font-size:12px;line-height:14px;color:#000">2020-08-27 15:00:27</div><svg class="a" style="left:829px;top:195px" width="22" height="14" viewBox="0 0 22 14">
<rect x="1.2" y="1.2" width="10" height="11.4" rx="1.3" fill="#c9c9cf" opacity="0.55"/>
<rect x="0.5" y="0.5" width="10" height="11" rx="1.3" fill="#eef1f9" stroke="#7a6c6a"/>
<rect x="2" y="3.2" width="6.6" height="6.6" fill="#a7aec5"/>
<g fill="#fff"><rect x="2.7" y="3.9" width="1.2" height="1.2"/><rect x="4.8" y="3.9" width="1.2" height="1.2"/><rect x="6.9" y="3.9" width="1.2" height="1.2"/>
<rect x="2.7" y="5.9" width="1.2" height="1.2"/><rect x="4.8" y="5.9" width="1.2" height="1.2"/><rect x="6.9" y="5.9" width="1.2" height="1.2"/>
<rect x="2.7" y="7.9" width="1.2" height="1.2"/><rect x="4.8" y="7.9" width="1.2" height="1.2"/><rect x="6.9" y="7.9" width="1.2" height="1.2"/></g>
<path d="M8.3 11.4V9.6H10.4" fill="none" stroke="#7a6c6a" stroke-width="0.8"/>
<path d="M13.1 4h7.1l-3.55 4z" fill="#3f5a8f"/>
</svg>
<div class="cb" style="left:876px;top:196px"><i></i></div>
<div class="t" style="left:894px;top:196px">牌号</div>
<div class="in" style="left:945px;top:192px;width:131px;height:20px"></div><div class="arr" style="left:1064px;top:200px"></div>
<div class="cb" style="left:1091px;top:196px"><i></i></div>
<div class="t" style="left:1108px;top:196px">装运方式</div>
<div class="in" style="left:1175px;top:192px;width:60px;height:20px"></div>
<div class="cb" style="left:228px;top:226px"><i></i></div>
<div class="t" style="left:246px;top:226px">宽度</div>
<div class="in" style="left:295px;top:222px;width:59px;height:20px"><span class="a" style="left:3px;top:3px;font-family:'DejaVu Sans Condensed','Liberation Sans',sans-serif;font-size:12.2px;line-height:14px">0.0</span></div>
<div class="t" style="left:362px;top:223px;font-family:'Liberation Mono',monospace;transform:scaleX(0.85);transform-origin:0 0;color:#000">~</div>
<div class="in" style="left:379px;top:222px;width:61px;height:20px"><span class="a" style="left:3px;top:3px;font-family:'DejaVu Sans Condensed','Liberation Sans',sans-serif;font-size:12.2px;line-height:14px">0.0</span></div>
<div class="cb" style="left:451px;top:226px"><i></i></div>
<div class="t" style="left:469px;top:226px">厚度</div>
<div class="in" style="left:529px;top:222px;width:53px;height:20px"><span class="a" style="left:3px;top:3px;font-family:'DejaVu Sans Condensed','Liberation Sans',sans-serif;font-size:12.2px;line-height:14px">0.0</span></div>
<div class="t" style="left:589px;top:223px;font-family:'Liberation Mono',monospace;transform:scaleX(0.85);transform-origin:0 0;color:#000">~</div>
<div class="in" style="left:606px;top:222px;width:56px;height:20px"><span class="a" style="left:3px;top:3px;font-family:'DejaVu Sans Condensed','Liberation Sans',sans-serif;font-size:12.2px;line-height:14px">0.0</span></div>
<div class="cb" style="left:679px;top:226px"><i></i></div>
<div class="t" style="left:697px;top:226px">订单状态</div>
<div class="in" style="left:764px;top:222px;width:91px;height:20px"></div><div class="arr" style="left:843px;top:230px"></div>
<div class="cb" style="left:875px;top:226px"><i></i></div>
<div class="t" style="left:893px;top:226px">材料去向</div>
<div class="in" style="left:948px;top:222px;width:131px;height:20px"></div><div class="arr" style="left:1067px;top:230px"></div>
<div class="cb" style="left:1091px;top:226px"><i></i></div>
<div class="t" style="left:1108px;top:226px">客户名称</div>
<div class="in" style="left:1175px;top:222px;width:60px;height:20px"></div>
<svg class="a" style="left:787px;top:262px" width="18" height="6" viewBox="0 0 18 6"><rect x="1" y="1" width="1" height="1" fill="#fbfbfd"/><rect x="5" y="1" width="1" height="1" fill="#fbfbfd"/><rect x="9" y="1" width="1" height="1" fill="#fbfbfd"/><rect x="13" y="1" width="1" height="1" fill="#fbfbfd"/><rect x="17" y="1" width="1" height="1" fill="#fbfbfd"/><rect x="3" y="3" width="1" height="1" fill="#fbfbfd"/><rect x="7" y="3" width="1" height="1" fill="#fbfbfd"/><rect x="11" y="3" width="1" height="1" fill="#fbfbfd"/><rect x="15" y="3" width="1" height="1" fill="#fbfbfd"/><rect x="1" y="5" width="1" height="1" fill="#fbfbfd"/><rect x="5" y="5" width="1" height="1" fill="#fbfbfd"/><rect x="9" y="5" width="1" height="1" fill="#fbfbfd"/><rect x="13" y="5" width="1" height="1" fill="#fbfbfd"/><rect x="17" y="5" width="1" height="1" fill="#fbfbfd"/><rect x="0" y="0" width="1" height="1" fill="#6a6a6e"/><rect x="4" y="0" width="1" height="1" fill="#6a6a6e"/><rect x="8" y="0" width="1" height="1" fill="#6a6a6e"/><rect x="12" y="0" width="1" height="1" fill="#6a6a6e"/><rect x="16" y="0" width="1" height="1" fill="#6a6a6e"/><rect x="2" y="2" width="1" height="1" fill="#6a6a6e"/><rect x="6" y="2" width="1" height="1" fill="#6a6a6e"/><rect x="10" y="2" width="1" height="1" fill="#6a6a6e"/><rect x="14" y="2" width="1" height="1" fill="#6a6a6e"/><rect x="0" y="4" width="1" height="1" fill="#6a6a6e"/><rect x="4" y="4" width="1" height="1" fill="#6a6a6e"/><rect x="8" y="4" width="1" height="1" fill="#6a6a6e"/><rect x="12" y="4" width="1" height="1" fill="#6a6a6e"/><rect x="16" y="4" width="1" height="1" fill="#6a6a6e"/></svg>
<div class="a" style="left:225px;top:270px;width:1002px;height:407px;background:#fff"></div>
<div class="hl" style="left:225px;top:270px;width:1002px"></div>
<div class="vl" style="left:225px;top:270px;height:407px"></div>
<div class="a" style="left:225px;top:292px;width:19px;height:385px;background:#FAFAFB"></div>
<div class="a" style="left:0;top:270px;width:1227px;height:407px;overflow:hidden">
<div class="gh" style="left:248px;top:2px">订单号</div>
<div class="gh" style="left:334px;top:2px">订单状态</div>
<div class="gh" style="left:437px;top:2px">钢种</div>
<div class="gh" style="left:513px;top:2px">标准</div>
<div class="gh" style="left:613px;top:2px">厚度</div>
<div class="gh" style="left:673px;top:2px">宽度</div>
<div class="gh" style="left:735px;top:2px">订货重量</div>
<div class="gh" style="left:831px;top:2px">结余量</div>
<div class="gh" style="left:919px;top:2px">计划量</div>
<div class="gh" style="left:997px;top:2px">待判量</div>
<div class="gh" style="left:1067px;top:2px">完成量</div>
<div class="gh" style="left:1144px;top:2px">完成率</div>
<svg class="a" style="left:317px;top:8px" width="9" height="5" viewBox="0 0 9 5"><path d="M0 5L4.5 0L9 5Z" fill="#7a7a7a"/></svg>
<div class="gh" style="left:1224px;top:2px">主</div>
<div class="a" style="left:331px;top:22px;width:102px;height:20px;background:#1E90FF"></div>
<div class="a" style="left:1142px;top:23px;width:73.7px;height:18px;background:#008000"></div>
<div class="g" style="left:248px;top:23px">GC2008013</div>
<div class="g" style="left:334px;top:24px;font-size:12px;color:#000">下发生产</div>
<div class="g" style="left:437px;top:23px">Q235B</div>
<div class="g" style="left:513px;top:23px">GB/T 700-2006</div>
<div class="g" style="left:613px;top:23px">5.5</div>
<div class="g" style="left:673px;top:23px">1250</div>
<div class="g" style="left:735px;top:23px">544</div>
<div class="g" style="left:831px;top:23px">9.84</div>
<div class="g" style="left:919px;top:23px">0</div>
<div class="g" style="left:997px;top:23px">15.97</div>
<div class="g" style="left:1067px;top:23px">518.19</div>
<div class="g" style="left:1144px;top:23px">95.26%</div>
<div class="g" style="left:1224px;top:23px">2</div>
<div class="a" style="left:331px;top:43px;width:102px;height:20px;background:#1E90FF"></div>
<div class="a" style="left:1142px;top:44px;width:76.3px;height:18px;background:#008000"></div>
<div class="g" style="left:248px;top:44px">GC2008014</div>
<div class="g" style="left:334px;top:45px;font-size:12px;color:#000">下发生产</div>
<div class="g" style="left:437px;top:44px">Q235B</div>
<div class="g" style="left:513px;top:44px">GB/T 700-2006</div>
<div class="g" style="left:613px;top:44px">5.75</div>
<div class="g" style="left:673px;top:44px">1250</div>
<div class="g" style="left:735px;top:44px">704</div>
<div class="g" style="left:831px;top:44px">-6.3</div>
<div class="g" style="left:919px;top:44px">0</div>
<div class="g" style="left:997px;top:44px">15.97</div>
<div class="g" style="left:1067px;top:44px">694.33</div>
<div class="g" style="left:1144px;top:44px">98.63%</div>
<div class="g" style="left:1224px;top:44px">2</div>
<div class="a" style="left:331px;top:64px;width:102px;height:20px;background:#008000"></div>
<div class="a" style="left:1142px;top:65px;width:75.5px;height:18px;background:#008000"></div>
<div class="g" style="left:248px;top:65px">GC2008015</div>
<div class="g" style="left:334px;top:66px;font-size:12px;color:#000">合同结案</div>
<div class="g" style="left:437px;top:65px">Q235B</div>
<div class="g" style="left:513px;top:65px">GB/T 700-2006</div>
<div class="g" style="left:613px;top:65px">7.2</div>
<div class="g" style="left:673px;top:65px">1250</div>
<div class="g" style="left:735px;top:65px">150</div>
<div class="g" style="left:831px;top:65px">3.64</div>
<div class="g" style="left:919px;top:65px">0</div>
<div class="g" style="left:997px;top:65px">0</div>
<div class="g" style="left:1067px;top:65px">146.36</div>
<div class="g" style="left:1144px;top:65px">97.57%</div>
<div class="g" style="left:1224px;top:65px">2</div>
<div class="a" style="left:331px;top:85px;width:102px;height:20px;background:#008000"></div>
<div class="a" style="left:1142px;top:86px;width:77.0px;height:18px;background:#008000"></div>
<div class="g" style="left:248px;top:86px">GC2008016</div>
<div class="g" style="left:334px;top:87px;font-size:12px;color:#000">合同结案</div>
<div class="g" style="left:437px;top:86px">Q235B</div>
<div class="g" style="left:513px;top:86px">GB/T 700-2006</div>
<div class="g" style="left:613px;top:86px">7.5</div>
<div class="g" style="left:673px;top:86px">1250</div>
<div class="g" style="left:735px;top:86px">240</div>
<div class="g" style="left:831px;top:86px">-2.05</div>
<div class="g" style="left:919px;top:86px">0</div>
<div class="g" style="left:997px;top:86px">0</div>
<div class="g" style="left:1067px;top:86px">242.05</div>
<div class="g" style="left:1144px;top:86px">100.85%</div>
<div class="g" style="left:1224px;top:86px">2</div>
<div class="a" style="left:331px;top:106px;width:102px;height:20px;background:#008000"></div>
<div class="a" style="left:1142px;top:107px;width:77.0px;height:18px;background:#008000"></div>
<div class="g" style="left:248px;top:107px">GC2008017</div>
<div class="g" style="left:334px;top:108px;font-size:12px;color:#000">合同结案</div>
<div class="g" style="left:437px;top:107px">Q235B</div>
<div class="g" style="left:513px;top:107px">GB/T 700-2006</div>
<div class="g" style="left:613px;top:107px">7.75</div>
<div class="g" style="left:673px;top:107px">1250</div>
<div class="g" style="left:735px;top:107px">400</div>
<div class="g" style="left:831px;top:107px">0</div>
<div class="g" style="left:919px;top:107px">0</div>
<div class="g" style="left:997px;top:107px">0</div>
<div class="g" style="left:1067px;top:107px">400</div>
<div class="g" style="left:1144px;top:107px">100%</div>
<div class="g" style="left:1224px;top:107px">2</div>
<div class="a" style="left:331px;top:127px;width:102px;height:20px;background:#008000"></div>
<div class="a" style="left:1142px;top:128px;width:77.0px;height:18px;background:#008000"></div>
<div class="g" style="left:248px;top:128px">GC2008018</div>
<div class="g" style="left:334px;top:129px;font-size:12px;color:#000">合同结案</div>
<div class="g" style="left:437px;top:128px">Q235B</div>
<div class="g" style="left:513px;top:128px">GB/T 700-2006</div>
<div class="g" style="left:613px;top:128px">9.2</div>
<div class="g" style="left:673px;top:128px">1250</div>
<div class="g" style="left:735px;top:128px">160</div>
<div class="g" style="left:831px;top:128px">-1.61</div>
<div class="g" style="left:919px;top:128px">0</div>
<div class="g" style="left:997px;top:128px">0</div>
<div class="g" style="left:1067px;top:128px">161.61</div>
<div class="g" style="left:1144px;top:128px">101.01%</div>
<div class="g" style="left:1224px;top:128px">2</div>
<div class="a" style="left:331px;top:148px;width:102px;height:20px;background:#008000"></div>
<div class="a" style="left:1142px;top:149px;width:77.0px;height:18px;background:#008000"></div>
<div class="g" style="left:248px;top:149px">GC2008019</div>
<div class="g" style="left:334px;top:150px;font-size:12px;color:#000">合同结案</div>
<div class="g" style="left:437px;top:149px">Q235B</div>
<div class="g" style="left:513px;top:149px">GB/T 700-2006</div>
<div class="g" style="left:613px;top:149px">9.5</div>
<div class="g" style="left:673px;top:149px">1250</div>
<div class="g" style="left:735px;top:149px">496</div>
<div class="g" style="left:831px;top:149px">-2.12</div>
<div class="g" style="left:919px;top:149px">0</div>
<div class="g" style="left:997px;top:149px">0</div>
<div class="g" style="left:1067px;top:149px">498.12</div>
<div class="g" style="left:1144px;top:149px">100.43%</div>
<div class="g" style="left:1224px;top:149px">2</div>
<div class="a" style="left:331px;top:169px;width:102px;height:20px;background:#008000"></div>
<div class="a" style="left:1142px;top:170px;width:77.0px;height:18px;background:#008000"></div>
<div class="g" style="left:248px;top:170px">GC2008020</div>
<div class="g" style="left:334px;top:171px;font-size:12px;color:#000">合同结案</div>
<div class="g" style="left:437px;top:170px">Q235B</div>
<div class="g" style="left:513px;top:170px">GB/T 700-2006</div>
<div class="g" style="left:613px;top:170px">9.75</div>
<div class="g" style="left:673px;top:170px">1250</div>
<div class="g" style="left:735px;top:170px">512</div>
<div class="g" style="left:831px;top:170px">-2.96</div>
<div class="g" style="left:919px;top:170px">0</div>
<div class="g" style="left:997px;top:170px">0</div>
<div class="g" style="left:1067px;top:170px">514.96</div>
<div class="g" style="left:1144px;top:170px">100.58%</div>
<div class="g" style="left:1224px;top:170px">2</div>
<div class="a" style="left:331px;top:190px;width:102px;height:20px;background:#1E90FF"></div>
<div class="a" style="left:1142px;top:191px;width:76.1px;height:18px;background:#008000"></div>
<div class="g" style="left:248px;top:191px">GC2008021</div>
<div class="g" style="left:334px;top:192px;font-size:12px;color:#000">下发生产</div>
<div class="g" style="left:437px;top:191px">Q195</div>
<div class="g" style="left:513px;top:191px">GB/T 700-2006</div>
<div class="g" style="left:613px;top:191px">3</div>
<div class="g" style="left:673px;top:191px">1250</div>
<div class="g" style="left:735px;top:191px">2000</div>
<div class="g" style="left:831px;top:191px">33.75</div>
<div class="g" style="left:919px;top:191px">0</div>
<div class="g" style="left:997px;top:191px">0</div>
<div class="g" style="left:1067px;top:191px">1966.25</div>
<div class="g" style="left:1144px;top:191px">98.31%</div>
<div class="g" style="left:1224px;top:191px">2</div>
<div class="a" style="left:331px;top:211px;width:102px;height:20px;background:#008000"></div>
<div class="a" style="left:1142px;top:212px;width:77.0px;height:18px;background:#008000"></div>
<div class="g" style="left:248px;top:212px">GC2008022</div>
<div class="g" style="left:334px;top:213px;font-size:12px;color:#000">合同结案</div>
<div class="g" style="left:437px;top:212px">Q235B</div>
<div class="g" style="left:513px;top:212px">GB/T 700-2006</div>
<div class="g" style="left:613px;top:212px">7.2</div>
<div class="g" style="left:673px;top:212px">1250</div>
<div class="g" style="left:735px;top:212px">1008</div>
<div class="g" style="left:831px;top:212px">1.87</div>
<div class="g" style="left:919px;top:212px">0</div>
<div class="g" style="left:997px;top:212px">0</div>
<div class="g" style="left:1067px;top:212px">1006.13</div>
<div class="g" style="left:1144px;top:212px">99.81%</div>
<div class="g" style="left:1224px;top:212px">2</div>
<div class="a" style="left:331px;top:232px;width:102px;height:20px;background:#008000"></div>
<div class="a" style="left:1142px;top:233px;width:77.0px;height:18px;background:#008000"></div>
<div class="g" style="left:248px;top:233px">GC2008023</div>
<div class="g" style="left:334px;top:234px;font-size:12px;color:#000">合同结案</div>
<div class="g" style="left:437px;top:233px">Q235B</div>
<div class="g" style="left:513px;top:233px">GB/T 700-2006</div>
<div class="g" style="left:613px;top:233px">9.2</div>
<div class="g" style="left:673px;top:233px">1250</div>
<div class="g" style="left:735px;top:233px">1008</div>
<div class="g" style="left:831px;top:233px">-0.68</div>
<div class="g" style="left:919px;top:233px">0</div>
<div class="g" style="left:997px;top:233px">0</div>
<div class="g" style="left:1067px;top:233px">1008.68</div>
<div class="g" style="left:1144px;top:233px">100.07%</div>
<div class="g" style="left:1224px;top:233px">2</div>
<div class="a" style="left:331px;top:253px;width:102px;height:20px;background:#1E90FF"></div>
<div class="a" style="left:1142px;top:254px;width:31.5px;height:18px;background:#FF0000"></div>
<div class="g" style="left:248px;top:254px">GC2008024</div>
<div class="g" style="left:334px;top:255px;font-size:12px;color:#000">下发生产</div>
<div class="g" style="left:437px;top:254px;font-family:'Liberation Sans',sans-serif;font-size:11.8px">J2</div>
<div class="g" style="left:513px;top:254px">Q/GCBZ 005-2...</div>
<div class="g" style="left:613px;top:254px">2.2</div>
<div class="g" style="left:673px;top:254px">1240</div>
<div class="g" style="left:735px;top:254px">2760</div>
<div class="g" style="left:831px;top:254px">1353.36</div>
<div class="g" style="left:919px;top:254px">293.89</div>
<div class="g" style="left:997px;top:254px">0</div>
<div class="g" style="left:1067px;top:254px">1132.75</div>
<div class="g" style="left:1144px;top:254px">40.75%</div>
<div class="g" style="left:1224px;top:254px">2</div>
<div class="a" style="left:331px;top:274px;width:102px;height:20px;background:#1E90FF"></div>
<div class="a" style="left:1142px;top:275px;width:62.9px;height:18px;background:#008000"></div>
<div class="g" style="left:248px;top:275px">GC2008025</div>
<div class="g" style="left:334px;top:276px;font-size:12px;color:#000">下发生产</div>
<div class="g" style="left:437px;top:275px;font-family:'Liberation Sans',sans-serif;font-size:11.8px">J2</div>
<div class="g" style="left:513px;top:275px">Q/GCBZ 005-2...</div>
<div class="g" style="left:613px;top:275px">2.4</div>
<div class="g" style="left:673px;top:275px">1240</div>
<div class="g" style="left:735px;top:275px">260</div>
<div class="g" style="left:831px;top:275px">48.83</div>
<div class="g" style="left:919px;top:275px">0</div>
<div class="g" style="left:997px;top:275px">0</div>
<div class="g" style="left:1067px;top:275px">211.17</div>
<div class="g" style="left:1144px;top:275px">81.22%</div>
<div class="g" style="left:1224px;top:275px">2</div>
<div class="a" style="left:331px;top:295px;width:102px;height:20px;background:#1E90FF"></div>
<div class="a" style="left:1142px;top:296px;width:14.9px;height:18px;background:#FF0000"></div>
<div class="g" style="left:248px;top:296px">GC2008026</div>
<div class="g" style="left:334px;top:297px;font-size:12px;color:#000">下发生产</div>
<div class="g" style="left:437px;top:296px">Q235B</div>
<div class="g" style="left:513px;top:296px">GB/T 700-2006</div>
<div class="g" style="left:613px;top:296px">2.75</div>
<div class="g" style="left:673px;top:296px">1250</div>
<div class="g" style="left:735px;top:296px">83</div>
<div class="g" style="left:831px;top:296px">50.73</div>
<div class="g" style="left:919px;top:296px">16.3</div>
<div class="g" style="left:997px;top:296px">0</div>
<div class="g" style="left:1067px;top:296px">15.97</div>
<div class="g" style="left:1144px;top:296px">19.24%</div>
<div class="g" style="left:1224px;top:296px">2</div>
<div class="a" style="left:331px;top:316px;width:102px;height:20px;background:#1E90FF"></div>
<div class="a" style="left:1142px;top:317px;width:67.1px;height:18px;background:#008000"></div>
<div class="g" style="left:248px;top:317px">GC2008027</div>
<div class="g" style="left:334px;top:318px;font-size:12px;color:#000">下发生产</div>
<div class="g" style="left:437px;top:317px">Q235B</div>
<div class="g" style="left:513px;top:317px">GB/T 700-2006</div>
<div class="g" style="left:613px;top:317px">3</div>
<div class="g" style="left:673px;top:317px">1250</div>
<div class="g" style="left:735px;top:317px">130</div>
<div class="g" style="left:831px;top:317px">1.29</div>
<div class="g" style="left:919px;top:317px">0</div>
<div class="g" style="left:997px;top:317px">15.97</div>
<div class="g" style="left:1067px;top:317px">112.74</div>
<div class="g" style="left:1144px;top:317px">86.72%</div>
<div class="g" style="left:1224px;top:317px">2</div>
<div class="a" style="left:331px;top:337px;width:102px;height:20px;background:#1E90FF"></div>
<div class="a" style="left:1142px;top:338px;width:23.9px;height:18px;background:#FF0000"></div>
<div class="g" style="left:248px;top:338px">GC2008028</div>
<div class="g" style="left:334px;top:339px;font-size:12px;color:#000">下发生产</div>
<div class="g" style="left:437px;top:338px">Q235B</div>
<div class="g" style="left:513px;top:338px">GB/T 700-2006</div>
<div class="g" style="left:613px;top:338px">3.5</div>
<div class="g" style="left:673px;top:338px">1250</div>
<div class="g" style="left:735px;top:338px">310</div>
<div class="g" style="left:831px;top:338px">165.28</div>
<div class="g" style="left:919px;top:338px">48.9</div>
<div class="g" style="left:997px;top:338px">0</div>
<div class="g" style="left:1067px;top:338px">95.82</div>
<div class="g" style="left:1144px;top:338px">30.91%</div>
<div class="g" style="left:1224px;top:338px">2</div>
<div class="a" style="left:331px;top:358px;width:102px;height:20px;background:#1E90FF"></div>
<div class="a" style="left:1142px;top:359px;width:45.6px;height:18px;background:#008000"></div>
<div class="g" style="left:248px;top:359px">GC2008029</div>
<div class="g" style="left:334px;top:360px;font-size:12px;color:#000">下发生产</div>
<div class="g" style="left:437px;top:359px">Q235B</div>
<div class="g" style="left:513px;top:359px">GB/T 700-2006</div>
<div class="g" style="left:613px;top:359px">3.75</div>
<div class="g" style="left:673px;top:359px">1250</div>
<div class="g" style="left:735px;top:359px">244</div>
<div class="g" style="left:831px;top:359px">4.45</div>
<div class="g" style="left:919px;top:359px">0</div>
<div class="g" style="left:997px;top:359px">95.82</div>
<div class="g" style="left:1067px;top:359px">143.73</div>
<div class="g" style="left:1144px;top:359px">58.91%</div>
<div class="g" style="left:1224px;top:359px">2</div>
<div class="a" style="left:331px;top:379px;width:102px;height:20px;background:#1E90FF"></div>
<div class="a" style="left:1142px;top:380px;width:15.4px;height:18px;background:#FF0000"></div>
<div class="g" style="left:248px;top:380px">GC2008030</div>
<div class="g" style="left:334px;top:381px;font-size:12px;color:#000">下发生产</div>
<div class="g" style="left:437px;top:380px">Q235B</div>
<div class="g" style="left:513px;top:380px">GB/T 700-2006</div>
<div class="g" style="left:613px;top:380px">4</div>
<div class="g" style="left:673px;top:380px">1250</div>
<div class="g" style="left:735px;top:380px">80</div>
<div class="g" style="left:831px;top:380px">16.12</div>
<div class="g" style="left:919px;top:380px">0</div>
<div class="g" style="left:997px;top:380px">47.91</div>
<div class="g" style="left:1067px;top:380px">15.97</div>
<div class="g" style="left:1144px;top:380px">19.96%</div>
<div class="g" style="left:1224px;top:380px">2</div>
<div class="a" style="left:331px;top:400px;width:102px;height:20px;background:#1E90FF"></div>
<div class="a" style="left:1142px;top:401px;width:16.3px;height:18px;background:#FF0000"></div>
<div class="g" style="left:248px;top:401px">GC2008031</div>
<div class="g" style="left:334px;top:402px;font-size:12px;color:#000">下发生产</div>
<div class="g" style="left:437px;top:401px">Q235B</div>
<div class="g" style="left:513px;top:401px">GB/T 700-2006</div>
<div class="g" style="left:613px;top:401px">4.5</div>
<div class="g" style="left:673px;top:401px">1250</div>
<div class="g" style="left:735px;top:401px">310</div>
<div class="g" style="left:831px;top:401px">228.38</div>
<div class="g" style="left:919px;top:401px">16.3</div>
<div class="g" style="left:997px;top:401px">0</div>
<div class="g" style="left:1067px;top:401px">65.32</div>
<div class="g" style="left:1144px;top:401px">21.07%</div>
<div class="g" style="left:1224px;top:401px">2</div>
<div class="hl" style="left:225px;top:21px;width:1003px"></div>
<div class="hl" style="left:244px;top:42px;width:1003px"></div>
<div class="hl" style="left:244px;top:63px;width:1003px"></div>
<div class="hl" style="left:244px;top:84px;width:1003px"></div>
<div class="hl" style="left:244px;top:105px;width:1003px"></div>
<div class="hl" style="left:244px;top:126px;width:1003px"></div>
<div class="hl" style="left:244px;top:147px;width:1003px"></div>
<div class="hl" style="left:244px;top:168px;width:1003px"></div>
<div class="hl" style="left:244px;top:189px;width:1003px"></div>
<div class="hl" style="left:244px;top:210px;width:1003px"></div>
<div class="hl" style="left:244px;top:231px;width:1003px"></div>
<div class="hl" style="left:244px;top:252px;width:1003px"></div>
<div class="hl" style="left:244px;top:273px;width:1003px"></div>
<div class="hl" style="left:244px;top:294px;width:1003px"></div>
<div class="hl" style="left:244px;top:315px;width:1003px"></div>
<div class="hl" style="left:244px;top:336px;width:1003px"></div>
<div class="hl" style="left:244px;top:357px;width:1003px"></div>
<div class="hl" style="left:244px;top:378px;width:1003px"></div>
<div class="hl" style="left:244px;top:399px;width:1003px"></div>
<div class="hl" style="left:244px;top:420px;width:1003px"></div>
<div class="vl" style="left:244px;top:0;height:407px"></div>
<div class="vl" style="left:330px;top:0;height:407px"></div>
<div class="vl" style="left:433px;top:0;height:407px"></div>
<div class="vl" style="left:509px;top:0;height:407px"></div>
<div class="vl" style="left:609px;top:0;height:407px"></div>
<div class="vl" style="left:669px;top:0;height:407px"></div>
<div class="vl" style="left:731px;top:0;height:407px"></div>
<div class="vl" style="left:827px;top:0;height:407px"></div>
<div class="vl" style="left:915px;top:0;height:407px"></div>
<div class="vl" style="left:993px;top:0;height:407px"></div>
<div class="vl" style="left:1063px;top:0;height:407px"></div>
<div class="vl" style="left:1140px;top:0;height:407px"></div>
<div class="vl" style="left:1221px;top:0;height:407px"></div>
</div>
<div class="a" style="left:225px;top:677px;width:1002px;height:30px;background:#EEEEF2"></div>
<div class="hl" style="left:225px;top:677px;width:1002px"></div>
<div class="ft" style="left:733px;width:94px">23895.5</div>
<div class="ft" style="left:829px;width:86px">3574.14</div>
<div class="ft" style="left:917px;width:76px">832.79</div>
<div class="ft" style="left:995px;width:68px">1293.63</div>
<div class="ft" style="left:1065px;width:75px">18214.94</div>
</body></html>
